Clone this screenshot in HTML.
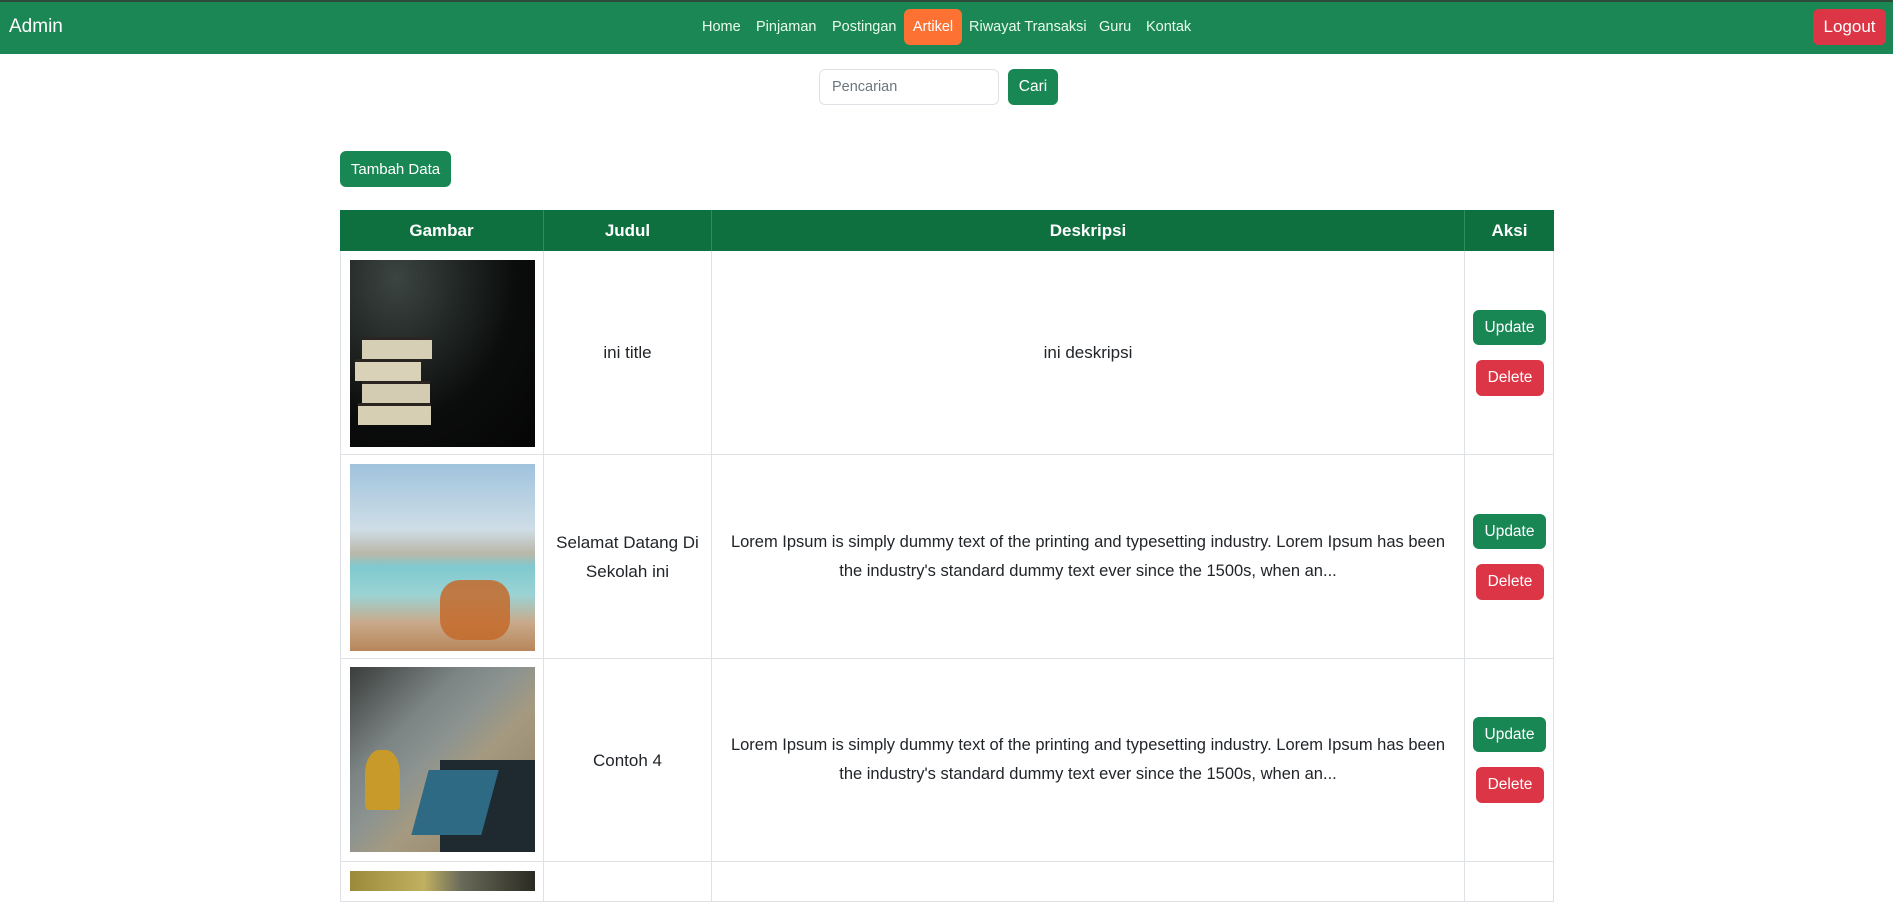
<!DOCTYPE html>
<html><head><meta charset="utf-8"><style>
*{box-sizing:border-box;margin:0;padding:0}
body{width:1893px;height:875px;overflow:hidden;background:#fff;font-family:"Liberation Sans",sans-serif;color:#212529;position:relative}
.abs{position:absolute}
.nav{left:0;top:0;width:1893px;height:54px;background:#1b8754;border-top:2px solid #2d4a3b}
.brand{left:9px;top:16px;font-size:19px;line-height:22px;color:#fff}
.link{top:18px;font-size:14.5px;line-height:18px;color:#eafbee;white-space:nowrap}
.btn{display:flex;align-items:center;justify-content:center;color:#fff;border-radius:6px;font-size:15.5px}
.g{background:#198754}.r{background:#dc3545}
.cell{position:absolute;border-right:1px solid #dee2e6;border-bottom:1px solid #dee2e6;display:flex;align-items:center;justify-content:center;text-align:center;font-size:17px;line-height:29px}
.th{background:#0e6f3f;color:#fff;font-weight:bold;font-size:17px;border-right:1px solid #2f8a5c;border-bottom:none}
</style></head><body>
<div class="abs nav"></div>
<div class="abs brand">Admin</div>
<div class="abs link" style="left:702px">Home</div>
<div class="abs link" style="left:756px">Pinjaman</div>
<div class="abs link" style="left:832px">Postingan</div>
<div class="abs btn" style="left:904px;top:9px;width:58px;height:36px;background:#fd7133;font-size:14.5px">Artikel</div>
<div class="abs link" style="left:969px">Riwayat Transaksi</div>
<div class="abs link" style="left:1099px">Guru</div>
<div class="abs link" style="left:1146px">Kontak</div>
<div class="abs btn r" style="left:1813px;top:9px;width:73px;height:36px;font-size:17px">Logout</div>

<div class="abs" style="left:819px;top:69px;width:180px;height:36px;border:1px solid #dee2e6;border-radius:6px;padding:9px 12px;font-size:14.5px;color:#6c757d">Pencarian</div>
<div class="abs btn g" style="left:1008px;top:69px;width:50px;height:36px">Cari</div>
<div class="abs btn g" style="left:340px;top:151px;width:111px;height:36px;font-size:15px">Tambah Data</div>

<div class="cell th" style="left:340px;top:210px;width:204px;height:41px">Gambar</div>
<div class="cell th" style="left:544px;top:210px;width:168px;height:41px">Judul</div>
<div class="cell th" style="left:712px;top:210px;width:753px;height:41px">Deskripsi</div>
<div class="cell th" style="left:1465px;top:210px;width:89px;height:41px;border-right:none">Aksi</div>

<!-- row 1 -->
<div class="cell" style="left:340px;top:251px;width:204px;height:204px;border-left:1px solid #dee2e6"></div>
<div class="abs" style="left:350px;top:260px;width:185px;height:187px;background:radial-gradient(ellipse at 25% 10%,#3c4542,#0b0d0c 60%,#050505)"></div>
<div class="abs" style="left:362px;top:337px;width:70px;height:22px;background:#d6cfb6;border-top:3px solid #2a2520"></div>
<div class="abs" style="left:355px;top:359px;width:66px;height:22px;background:#d9d2b8;border-top:3px solid #2a2520"></div>
<div class="abs" style="left:362px;top:381px;width:68px;height:22px;background:#d3ccb2;border-top:3px solid #2a2520"></div>
<div class="abs" style="left:358px;top:403px;width:73px;height:22px;background:#d6cfb4;border-top:3px solid #2a2520"></div>
<div class="cell" style="left:544px;top:251px;width:168px;height:204px">ini title</div>
<div class="cell" style="left:712px;top:251px;width:753px;height:204px">ini deskripsi</div>
<div class="cell" style="left:1465px;top:251px;width:89px;height:204px"></div>
<div class="abs btn g" style="left:1473px;top:310px;width:73px;height:35px">Update</div>
<div class="abs btn r" style="left:1476px;top:360px;width:68px;height:36px">Delete</div>

<!-- row 2 -->
<div class="cell" style="left:340px;top:455px;width:204px;height:204px;border-left:1px solid #dee2e6"></div>
<div class="abs" style="left:350px;top:464px;width:185px;height:187px;background:linear-gradient(180deg,#9fc3dd 0%,#cfdde6 35%,#b9b7a8 48%,#7fc9cf 55%,#9bd3d4 70%,#c9a98a 85%,#b7865a 100%)"></div>
<div class="abs" style="left:440px;top:580px;width:70px;height:60px;background:#c46a2a;border-radius:20px;opacity:.85"></div>
<div class="cell" style="left:544px;top:455px;width:168px;height:204px">Selamat Datang Di<br>Sekolah ini</div>
<div class="cell" style="left:712px;top:455px;width:753px;height:204px;font-size:16.5px">Lorem Ipsum is simply dummy text of the printing and typesetting industry. Lorem Ipsum has been<br>the industry's standard dummy text ever since the 1500s, when an...</div>
<div class="cell" style="left:1465px;top:455px;width:89px;height:204px"></div>
<div class="abs btn g" style="left:1473px;top:514px;width:73px;height:35px">Update</div>
<div class="abs btn r" style="left:1476px;top:564px;width:68px;height:36px">Delete</div>

<!-- row 3 -->
<div class="cell" style="left:340px;top:659px;width:204px;height:203px;border-left:1px solid #dee2e6"></div>
<div class="abs" style="left:350px;top:667px;width:185px;height:185px;background:linear-gradient(135deg,#3a3d3c 0%,#7b8483 30%,#8b9391 45%,#a59a80 60%,#8a7a60 100%)"></div>
<div class="abs" style="left:440px;top:760px;width:95px;height:92px;background:#1e2a30"></div>
<div class="abs" style="left:420px;top:770px;width:70px;height:65px;background:#2f6a85;transform:skewX(-15deg)"></div>
<div class="abs" style="left:365px;top:750px;width:35px;height:60px;background:#c79a2a;border-radius:40% 40% 10% 10%"></div>
<div class="cell" style="left:544px;top:659px;width:168px;height:203px">Contoh 4</div>
<div class="cell" style="left:712px;top:659px;width:753px;height:203px;font-size:16.5px">Lorem Ipsum is simply dummy text of the printing and typesetting industry. Lorem Ipsum has been<br>the industry's standard dummy text ever since the 1500s, when an...</div>
<div class="cell" style="left:1465px;top:659px;width:89px;height:203px"></div>
<div class="abs btn g" style="left:1473px;top:717px;width:73px;height:35px">Update</div>
<div class="abs btn r" style="left:1476px;top:767px;width:68px;height:36px">Delete</div>

<!-- row 4 -->
<div class="cell" style="left:340px;top:862px;width:204px;height:40px;border-left:1px solid #dee2e6"></div>
<div class="abs" style="left:350px;top:871px;width:185px;height:20px;background:linear-gradient(90deg,#9a8a3a 0%,#c0b060 40%,#6a6a5a 60%,#2a2a22 100%)"></div>
<div class="cell" style="left:544px;top:862px;width:168px;height:40px"></div>
<div class="cell" style="left:712px;top:862px;width:753px;height:40px"></div>
<div class="cell" style="left:1465px;top:862px;width:89px;height:40px"></div>
</body></html>
